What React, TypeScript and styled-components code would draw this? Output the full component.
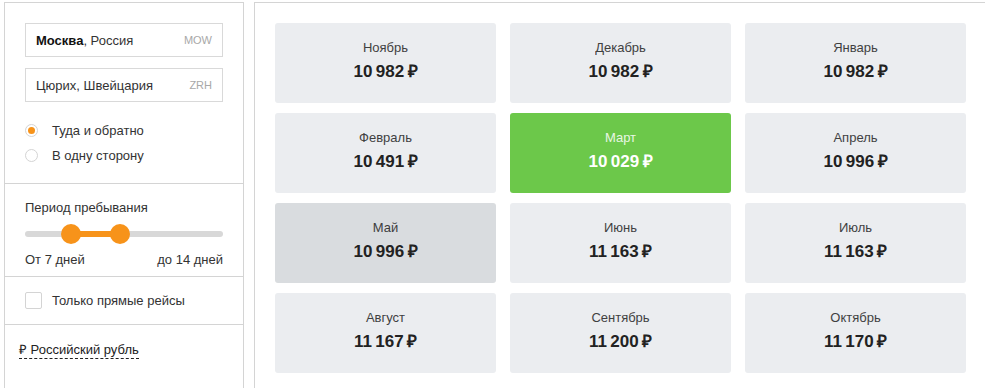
import React from "react";
import styled, { createGlobalStyle } from "styled-components";

interface monthPrice {
  month: string;
  price: string;
  kind?: "best" | "active";
}

const months: monthPrice[] = [
  { month: "Ноябрь", price: "10 982" },
  { month: "Декабрь", price: "10 982" },
  { month: "Январь", price: "10 982" },
  { month: "Февраль", price: "10 491" },
  { month: "Март", price: "10 029", kind: "best" },
  { month: "Апрель", price: "10 996" },
  { month: "Май", price: "10 996", kind: "active" },
  { month: "Июнь", price: "11 163" },
  { month: "Июль", price: "11 163" },
  { month: "Август", price: "11 167" },
  { month: "Сентябрь", price: "11 200" },
  { month: "Октябрь", price: "11 170" },
];

// узкий неразрывный пробел между разрядами и перед знаком рубля
const formatPrice = (price: string) => price.replace(" ", "\u202F") + "\u202F₽";

function App() {
  return (
    <>
      <GlobalStyle />
      <Page>
        <Sidebar>
          <Section>
            <CityInput>
              <CityName>
                <b>Москва</b>, Россия
              </CityName>
              <Code>MOW</Code>
            </CityInput>
            <CityInput>
              <CityName>Цюрих, Швейцария</CityName>
              <Code>ZRH</Code>
            </CityInput>
            <RadioGroup>
              <RadioRow>
                <Radio checked />
                Туда и обратно
              </RadioRow>
              <RadioRow>
                <Radio />В одну сторону
              </RadioRow>
            </RadioGroup>
          </Section>
          <SliderSection>
            <Label>Период пребывания</Label>
            <Track>
              <Fill style={{ left: 46, width: 49 }} />
              <Handle style={{ left: 36 }} />
              <Handle style={{ left: 85 }} />
            </Track>
            <RangeLabels>
              <span>От 7 дней</span>
              <span>до 14 дней</span>
            </RangeLabels>
          </SliderSection>
          <CheckSection>
            <Checkbox />
            Только прямые рейсы
          </CheckSection>
          <CurrencySection>
            <Currency>₽ Российский рубль</Currency>
          </CurrencySection>
        </Sidebar>
        <Main>
          <Grid>
            {months.map((item) => (
              <Card key={item.month} kind={item.kind}>
                <Month>{item.month}</Month>
                <Price>{formatPrice(item.price)}</Price>
              </Card>
            ))}
          </Grid>
        </Main>
      </Page>
    </>
  );
}

export default App;

const GlobalStyle = createGlobalStyle`
  *, *::before, *::after {
    box-sizing: border-box;
  }
  html, body {
    margin: 0;
    background: #fff;
    overflow: hidden;
  }
  body {
    font-family: "Liberation Sans", Arial, sans-serif;
    color: #333;
  }
`;

const Page = styled.div`
  display: flex;
  gap: 10px;
  padding: 2px 0 0 4px;
  width: 1000px;
  height: 388px;
`;

const Sidebar = styled.div`
  width: 240px;
  flex-shrink: 0;
  border: 1px solid #d4d4d4;
  border-bottom: none;
  display: flex;
  flex-direction: column;
`;

const Section = styled.div`
  padding: 20px 20px 0;
  height: 181px;
  border-bottom: 1px solid #d4d4d4;
  display: flex;
  flex-direction: column;
  gap: 11px;
`;

const CityInput = styled.div`
  height: 34px;
  border: 1px solid #d9d9d9;
  display: flex;
  align-items: center;
  justify-content: space-between;
  padding: 0 10px;
  font-size: 13px;
  color: #333;
`;

const CityName = styled.span`
  b {
    color: #111;
  }
`;

const Code = styled.span`
  font-size: 11px;
  color: #a8a8a8;
`;

const RadioGroup = styled.div`
  display: flex;
  flex-direction: column;
  gap: 11px;
  margin-top: 10px;
`;

const RadioRow = styled.label`
  display: flex;
  align-items: center;
  gap: 14px;
  font-size: 13px;
  color: #333;
  height: 14px;
`;

const Radio = styled.span<{ checked?: boolean }>`
  width: 13px;
  height: 13px;
  border-radius: 50%;
  border: 1px solid #d4d4d4;
  background: #fff;
  display: flex;
  align-items: center;
  justify-content: center;
  &::after {
    content: "";
    width: 7px;
    height: 7px;
    border-radius: 50%;
    background: ${(p) => (p.checked ? "#f7931a" : "transparent")};
  }
`;

const SliderSection = styled.div`
  height: 93px;
  padding: 16px 20px 0;
  border-bottom: 1px solid #d4d4d4;
`;

const Label = styled.div`
  font-size: 13px;
  color: #333;
`;

const Track = styled.div`
  position: relative;
  margin-top: 16px;
  height: 6px;
  border-radius: 3px;
  background: #d8d8d8;
`;

const Fill = styled.div`
  position: absolute;
  top: 0;
  height: 6px;
  background: #f7931a;
`;

const Handle = styled.div`
  position: absolute;
  top: -7px;
  width: 20px;
  height: 20px;
  border-radius: 50%;
  background: #f7931a;
`;

const RangeLabels = styled.div`
  display: flex;
  justify-content: space-between;
  margin-top: 15px;
  font-size: 13px;
  color: #333;
`;

const CheckSection = styled.label`
  height: 48px;
  padding: 0 20px;
  border-bottom: 1px solid #d4d4d4;
  display: flex;
  align-items: center;
  gap: 10px;
  font-size: 13px;
  color: #333;
`;

const Checkbox = styled.span`
  width: 17px;
  height: 17px;
  border: 1px solid #d4d4d4;
  border-radius: 2px;
  background: #fff;
`;

const CurrencySection = styled.div`
  padding: 15px 14px;
`;

const Currency = styled.span`
  font-size: 13px;
  color: #222;
  border-bottom: 1px dashed #222;
  padding-bottom: 1px;
`;

const Main = styled.div`
  width: 740px;
  flex-shrink: 0;
  border: 1px solid #d4d4d4;
  border-bottom: none;
  padding: 20px 0 0 20px;
`;

const Grid = styled.div`
  display: grid;
  grid-template-columns: repeat(3, 221px);
  grid-auto-rows: 80px;
  column-gap: 14px;
  row-gap: 10px;
`;

const cardBg = { best: "#6cc84a", active: "#d9dcdf" };

const Card = styled.div<{ kind?: "best" | "active" }>`
  background: ${(p) => (p.kind ? cardBg[p.kind] : "#ebedf0")};
  color: ${(p) => (p.kind === "best" ? "#fff" : "#222")};
  border-radius: 3px;
  display: flex;
  flex-direction: column;
  align-items: center;
  padding-top: 17px;
`;

const Month = styled.div`
  font-size: 13px;
  line-height: 15px;
  opacity: 0.85;
`;

const Price = styled.div`
  margin-top: 7px;
  font-size: 17px;
  line-height: 20px;
  font-weight: bold;
  letter-spacing: -0.2px;
  color: inherit;
`;
